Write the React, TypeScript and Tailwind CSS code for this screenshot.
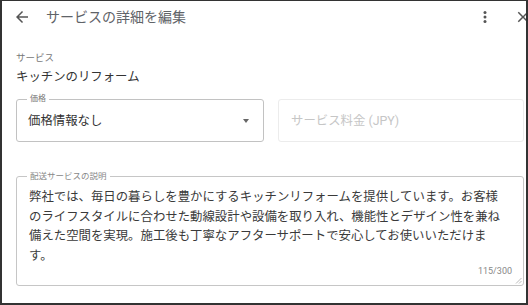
import React from "react";

const FONT = "font-['Roboto','Noto_Sans_CJK_JP',sans-serif]";

export default function App() {
  const lines = [
    "弊社では、毎日の暮らしを豊かにするキッチンリフォームを提供しています。お客様",
    "のライフスタイルに合わせた動線設計や設備を取り入れ、機能性とデザイン性を兼ね",
    "備えた空間を実現。施工後も丁寧なアフターサポートで安心してお使いいただけま",
    "す。",
  ];
  return (
    <div
      className={`${FONT} w-[528px] h-[305px] bg-white overflow-hidden border-l-2 border-r-2 border-t border-b-2 border-[#333] flex flex-col pl-[14px] pr-[2px]`}
    >
      {/* header */}
      <div className="h-[32px] flex items-center justify-between shrink-0 -ml-[3px] -mr-[8px]">
        <div className="flex items-center">
          <svg width="18" height="18" viewBox="0 0 24 24" className="text-[#555]">
            <path
              fill="currentColor"
              d="M20 11H7.83l5.59-5.59L12 4l-8 8 8 8 1.41-1.41L7.83 13H20v-2z"
            />
          </svg>
          <span className="ml-[15px] text-[14px] leading-[18px] text-[#5f6368]">
            サービスの詳細を編集
          </span>
        </div>
        <div className="flex items-center gap-[20px]">
          <svg width="18" height="18" viewBox="0 0 24 24" className="text-[#555]">
            <circle cx="12" cy="6" r="2" fill="currentColor" />
            <circle cx="12" cy="12" r="2" fill="currentColor" />
            <circle cx="12" cy="18" r="2" fill="currentColor" />
          </svg>
          <svg width="18" height="18" viewBox="0 0 24 24" className="text-[#555]">
            <path
              fill="currentColor"
              d="M19 6.41L17.59 5 12 10.59 6.41 5 5 6.41 10.59 12 5 17.59 6.41 19 12 13.41 17.59 19 19 17.59 13.41 12z"
            />
          </svg>
        </div>
      </div>

      {/* service */}
      <div className="mt-[19px] text-[9.5px] leading-[12px] text-[#777]">サービス</div>
      <div className="mt-[5px] text-[12.4px] leading-[16px] text-[#333]">
        キッチンのリフォーム
      </div>

      {/* price row */}
      <div className="mt-[14px] flex gap-[14px] h-[43px] shrink-0">
        <div className="relative w-[248px] shrink-0 border border-[#c2c2c2] rounded-[3px] flex items-center justify-between pl-[11px] pr-[14px]">
          <span className="absolute -top-[7px] left-[10px] bg-white px-[3px] text-[8px] leading-[12px] text-[#777]">
            価格
          </span>
          <span className="text-[12.4px] leading-[16px] text-[#333]">価格情報なし</span>
          <div className="w-0 h-0 border-l-[3.5px] border-r-[3.5px] border-t-[4px] border-l-transparent border-r-transparent border-t-[#666]" />
        </div>
        <div className="w-[246px] shrink-0 border border-[#ececec] rounded-[3px] flex items-center pl-[12px]">
          <span className="text-[12.4px] leading-[16px] text-[#c6c6c6]">
            サービス料金 (JPY)
          </span>
        </div>
      </div>

      {/* description */}
      <div className="mt-[34px] relative border border-[#c6c6c6] rounded-[3px] pt-[10px] pb-[8px] pl-[12px] pr-[11px] h-[110px] shrink-0">
        <span className="absolute -top-[7px] left-[10px] bg-white px-[3px] text-[8.5px] leading-[12px] text-[#888]">
          配送サービスの説明
        </span>
        <div className="text-[12.4px] leading-[19.5px] text-[#3a3a3a]">
          {lines.map((l, i) => (
            <div key={i} className="whitespace-nowrap">
              {l}
            </div>
          ))}
        </div>
        <div className="text-right text-[9px] leading-[12px] text-[#888]">115/300</div>
        <svg
          width="7"
          height="7"
          viewBox="0 0 7 7"
          className="absolute right-[1px] bottom-[1px]"
        >
          <path d="M6.5 1 L1 6.5 M6.5 4 L4 6.5" stroke="#aaa" strokeWidth="0.8" />
        </svg>
      </div>
    </div>
  );
}
